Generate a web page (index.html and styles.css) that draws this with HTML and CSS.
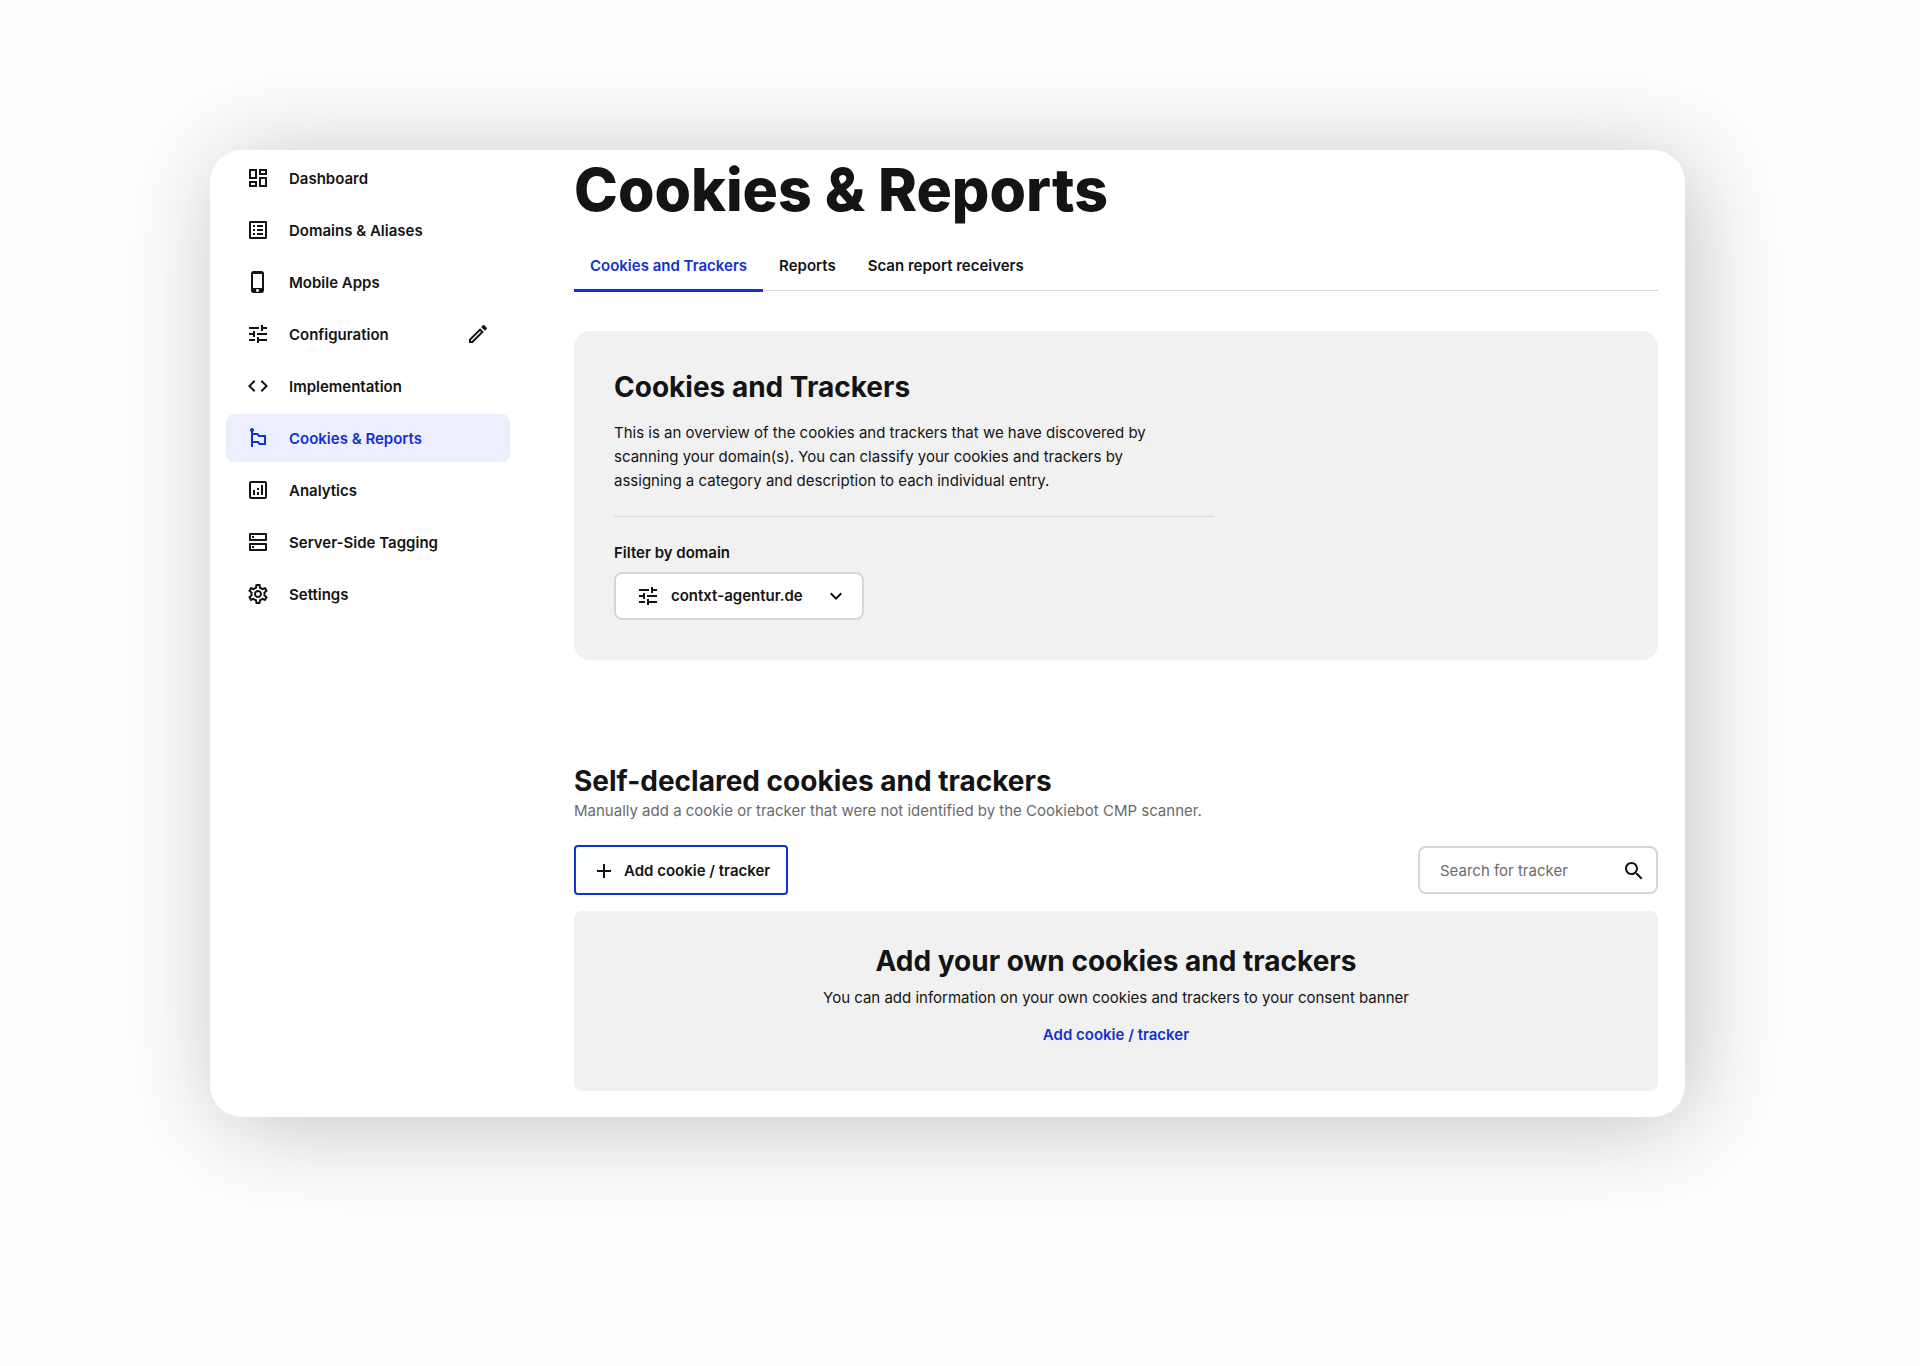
FILE: index.html
```html
<!DOCTYPE html>
<html lang="en">
<head>
<meta charset="utf-8">
<meta name="viewport" content="width=device-width, initial-scale=1">
<title>Cookies &amp; Reports</title>
<link rel="stylesheet" href="styles.css">
</head>
<body>
<div class="window">
  <nav class="sidebar" aria-label="Main">
    <a class="nav-item" href="#dashboard">
      <svg class="icon" viewBox="0 0 24 24"><path d="M19 5v2h-4V5h4M9 5v6H5V5h4m10 8v6h-4v-6h4M9 17v2H5v-2h4M21 3h-8v6h8V3zM11 3H3v10h8V3zm10 8h-8v10h8V11zm-10 4H3v6h8v-6z"/></svg>
      <span class="nav-label">Dashboard</span>
    </a>
    <a class="nav-item" href="#domains">
      <svg class="icon" viewBox="0 0 24 24"><path d="M11 7h6v2h-6zm0 4h6v2h-6zm0 4h6v2h-6zM7 7h2v2H7zm0 4h2v2H7zm0 4h2v2H7zM20.1 3H3.9c-.5 0-.9.4-.9.9v16.2c0 .4.4.9.9.9h16.2c.4 0 .9-.5.9-.9V3.900c0-.5-.5-.9-.9-.9zM19 19H5V5h14v14z"/></svg>
      <span class="nav-label">Domains &amp; Aliases</span>
    </a>
    <a class="nav-item" href="#apps">
      <svg class="icon" viewBox="0 0 24 24"><path d="M15.500 1h-8C6.120 1 5 2.120 5 3.500v17C5 21.880 6.120 23 7.500 23h8c1.380 0 2.500-1.120 2.500-2.500v-17C18 2.120 16.880 1 15.500 1zm-4 21c-.83 0-1.500-.67-1.500-1.500s.67-1.500 1.500-1.500 1.500.67 1.500 1.500-.67 1.500-1.500 1.500zm4.500-4H7V4h9v14z"/></svg>
      <span class="nav-label">Mobile Apps</span>
    </a>
    <a class="nav-item" href="#configuration">
      <svg class="icon" viewBox="0 0 24 24"><path d="M3 17v2h6v-2H3zM3 5v2h10V5H3zm10 16v-2h8v-2h-8v-2h-2v6h2zM7 9v2H3v2h4v2h2V9H7zm14 4v-2H11v2h10zm-6-4h2V7h4V5h-4V3h-2v6z"/></svg>
      <span class="nav-label">Configuration</span>
      <svg class="icon" viewBox="0 0 24 24"><path d="M14.060 9.020l.92.92L5.920 19H5v-.92l9.060-9.060M17.660 3c-.25 0-.51.1-.7.29l-1.830 1.830 3.750 3.750 1.830-1.830c.39-.39.39-1.020 0-1.410l-2.340-2.340c-.2-.2-.45-.29-.71-.29zm-3.600 3.190L3 17.250V21h3.750L17.810 9.940l-3.750-3.750z"/></svg>
    </a>
    <a class="nav-item" href="#implementation">
      <svg class="icon" viewBox="0 0 24 24"><path d="M9.400 16.600L4.800 12l4.600-4.600L8 6l-6 6 6 6 1.400-1.400zm5.200 0l4.600-4.600-4.600-4.600L16 6l6 6-6 6-1.400-1.400z"/></svg>
      <span class="nav-label">Implementation</span>
    </a>
    <a class="nav-item nav-item-active" href="#cookies" aria-current="page">
      <svg class="icon" viewBox="0 0 24 24"><circle cx="6" cy="4" r="2"/><path d="M5 4h2v3h5l1.500 2H20v10h-7l-1.500-2H7v4H5zM7 9v6h5.500l1.500 2h4v-6h-5.500L11 9z"/></svg>
      <span class="nav-label">Cookies &amp; Reports</span>
    </a>
    <a class="nav-item" href="#analytics">
      <svg class="icon" viewBox="0 0 24 24"><path d="M19 3H5c-1.100 0-2 .9-2 2v14c0 1.100.9 2 2 2h14c1.100 0 2-.9 2-2V5c0-1.100-.9-2-2-2zm0 16H5V5h14v14zM7 12h2v5H7zm8-5h2v10h-2zm-4 7h2v3h-2zm0-4h2v2h-2z"/></svg>
      <span class="nav-label">Analytics</span>
    </a>
    <a class="nav-item" href="#tagging">
      <svg class="icon" viewBox="0 0 24 24"><path d="M19 15v4H5v-4h14m1-2H4c-.55 0-1 .45-1 1v6c0 .55.45 1 1 1h16c.55 0 1-.45 1-1v-6c0-.55-.45-1-1-1zM6 16h2v2H6zM19 5v4H5V5h14m1-2H4c-.55 0-1 .45-1 1v6c0 .55.45 1 1 1h16c.55 0 1-.45 1-1V4c0-.55-.45-1-1-1zM6 6h2v2H6z"/></svg>
      <span class="nav-label">Server-Side Tagging</span>
    </a>
    <a class="nav-item" href="#settings">
      <svg class="icon" viewBox="0 0 24 24"><path d="M19.430 12.980c.04-.32.07-.64.07-.98 0-.34-.03-.66-.07-.98l2.110-1.650c.19-.15.24-.42.12-.64l-2-3.460c-.09-.16-.26-.25-.44-.25-.06 0-.12.010-.17.030l-2.490 1c-.52-.4-1.080-.73-1.690-.98l-.38-2.650C14.460 2.180 14.250 2 14 2h-4c-.25 0-.46.18-.49.42l-.38 2.650c-.61.25-1.170.59-1.690.98l-2.490-1c-.06-.02-.12-.03-.18-.03-.17 0-.34.09-.43.25l-2 3.460c-.13.22-.07.49.12.64l2.110 1.650c-.04.32-.07.65-.07.98 0 .33.030.66.070.98l-2.110 1.650c-.19.15-.24.42-.12.640l2 3.460c.09.160.260.250.440.250.06 0 .12-.01.170-.03l2.490-1c.52.4 1.080.73 1.690.98l.38 2.650c.03.240.24.420.49.420h4c.25 0 .46-.18.49-.42l.38-2.650c.61-.25 1.170-.59 1.690-.98l2.490 1c.06.020.12.030.18.030.17 0 .34-.09.43-.25l2-3.460c.12-.22.07-.49-.12-.64l-2.110-1.650zm-1.980-1.710c.04.310.05.520.05.730 0 .21-.02.430-.05.730l-.14 1.130.89.7 1.080.84-.7 1.210-1.270-.51-1.040-.42-.9.680c-.43.320-.84.560-1.250.730l-1.060.43-.16 1.130-.2 1.350h-1.400l-.19-1.350-.16-1.130-1.060-.43c-.43-.18-.83-.41-1.230-.71l-.91-.7-1.060.43-1.270.51-.7-1.210 1.080-.84.89-.7-.14-1.130c-.03-.31-.05-.54-.05-.74s.02-.43.05-.73l.14-1.130-.89-.7-1.080-.84.7-1.210 1.270.51 1.040.42.9-.68c.43-.32.84-.56 1.250-.73l1.060-.43.160-1.130.2-1.350h1.390l.19 1.350.16 1.130 1.060.43c.43.180.83.410 1.230.710l.91.7 1.060-.43 1.270-.51.7 1.210-1.070.85-.89.7.14 1.130zM12 8c-2.210 0-4 1.790-4 4s1.790 4 4 4 4-1.790 4-4-1.790-4-4-4zm0 6c-1.100 0-2-.9-2-2s.9-2 2-2 2 .9 2 2-.9 2-2 2z"/></svg>
      <span class="nav-label">Settings</span>
    </a>
  </nav>

  <main class="content">
    <h1 class="page-title">Cookies &amp; Reports</h1>
    <div class="tabs" role="tablist">
      <button class="tab tab-active" type="button" role="tab" aria-selected="true">Cookies and Trackers</button>
      <button class="tab" type="button" role="tab" aria-selected="false">Reports</button>
      <button class="tab" type="button" role="tab" aria-selected="false">Scan report receivers</button>
    </div>

    <section class="overview">
      <h2 class="heading">Cookies and Trackers</h2>
      <p class="overview-text">This is an overview of the cookies and trackers that we have discovered by scanning your domain(s). You can classify your cookies and trackers by assigning a category and description to each individual entry.</p>
      <hr class="rule">
      <label class="filter-label" for="domain">Filter by domain</label>
      <div class="filter">
        <svg class="icon filter-icon" viewBox="0 0 24 24"><path d="M3 17v2h6v-2H3zM3 5v2h10V5H3zm10 16v-2h8v-2h-8v-2h-2v6h2zM7 9v2H3v2h4v2h2V9H7zm14 4v-2H11v2h10zm-6-4h2V7h4V5h-4V3h-2v6z"/></svg>
        <select class="filter-select" id="domain"><option>contxt-agentur.de</option></select>
        <svg class="icon filter-arrow" viewBox="0 0 24 24"><path d="M7.410 8.590L12 13.170l4.590-4.580L18 10l-6 6-6-6 1.410-1.410z"/></svg>
      </div>
    </section>

    <section class="declared">
      <h2 class="heading">Self-declared cookies and trackers</h2>
      <p class="declared-text">Manually add a cookie or tracker that were not identified by the Cookiebot CMP scanner.</p>
      <div class="toolbar">
        <button class="add-button" type="button">
          <svg class="icon" viewBox="0 0 24 24"><path d="M19 13h-6v6h-2v-6H5v-2h6V5h2v6h6v2z"/></svg>
          Add cookie / tracker
        </button>
        <div class="search">
          <input class="search-input" type="search" placeholder="Search for tracker" aria-label="Search for tracker">
          <svg class="icon" viewBox="0 0 24 24"><path d="M15.500 14h-.79l-.28-.27C15.410 12.590 16 11.110 16 9.500 16 5.910 13.090 3 9.500 3S3 5.910 3 9.500 5.910 16 9.500 16c1.610 0 3.090-.59 4.230-1.570l.27.28v.79l5 4.990L20.490 19l-4.990-5zm-6 0C7.010 14 5 11.990 5 9.500S7.010 5 9.500 5 14 7.010 14 9.500 11.990 14 9.500 14z"/></svg>
        </div>
      </div>
      <div class="empty">
        <h2 class="heading">Add your own cookies and trackers</h2>
        <p class="empty-text">You can add information on your own cookies and trackers to your consent banner</p>
        <a class="empty-link" href="#add">Add cookie / tracker</a>
      </div>
    </section>
  </main>
</div>
</body>
</html>
```

FILE: styles.css
```css
:root {
  --ink: #141414;
  --blue: #1032cf;
  --panel: #f1f1f1;
  --line: #d6d6d6;
}

* {
  box-sizing: border-box;
}

body {
  margin: 0;
  background: #fefefe;
  color: var(--ink);
  font-family: Inter, "Liberation Sans", sans-serif;
  font-size: 15px;
  line-height: 24px;
}

h1, h2, p {
  margin: 0;
}

button, input, select {
  color: inherit;
  font: inherit;
}

.window {
  display: flex;
  gap: 64px;
  margin: 150px 235px 249px 210px;
  padding: 4px 27px 26px 16px;
  border-radius: 32px;
  background: #fff;
  box-shadow: 8px 8px 100px rgba(0, 0, 0, 0.24);
}

.icon {
  flex: none;
  width: 24px;
  height: 24px;
  fill: currentColor;
}

.sidebar {
  display: flex;
  flex: none;
  flex-direction: column;
  gap: 4px;
  width: 284px;
}

.nav-item {
  display: flex;
  align-items: center;
  gap: 19px;
  height: 48px;
  padding: 0 20px;
  border-radius: 8px;
  color: var(--ink);
  font-weight: 600;
  text-decoration: none;
}

.nav-item-active {
  background: #edeefe;
  color: var(--blue);
}

.nav-label {
  flex: 1;
  padding-top: 2px;
}

.content {
  flex: 1;
  min-width: 0;
}

.page-title {
  font-size: 59px;
  font-weight: 800;
  line-height: 72px;
}

.tabs {
  display: flex;
  height: 65px;
  margin-bottom: 40px;
  border-bottom: 1px solid var(--line);
}

.tab {
  height: 66px;
  padding: 28px 16px 11px;
  border: 0;
  border-bottom: 3px solid transparent;
  background: none;
  font-weight: 600;
}

.tab-active {
  border-color: var(--blue);
  color: var(--blue);
}

.heading {
  font-size: 28px;
  font-weight: 700;
  line-height: 32px;
}

.overview {
  padding: 40px;
  border-radius: 16px;
  background: var(--panel);
}

.overview-text {
  max-width: 560px;
  margin-top: 18px;
}

.rule {
  max-width: 600px;
  height: 1px;
  margin: 23px 0 24px;
  border: 0;
  background: var(--line);
}

.filter-label {
  display: block;
  font-weight: 600;
}

.filter {
  display: grid;
  grid-template-columns: 46px 1fr 56px;
  align-items: center;
  width: 250px;
  margin-top: 7px;
}

.filter-icon,
.filter-arrow,
.filter-select {
  grid-row: 1;
}

.filter-icon {
  z-index: 1;
  grid-column: 1;
  justify-self: end;
  pointer-events: none;
}

.filter-arrow {
  z-index: 1;
  grid-column: 3;
  justify-self: center;
  pointer-events: none;
}

.filter-select {
  grid-column: 1 / -1;
  width: 100%;
  height: 48px;
  padding: 0 55px;
  border: 2px solid var(--line);
  border-radius: 8px;
  background: #fff;
  font-weight: 600;
  appearance: none;
}

.declared {
  margin-top: 105px;
}

.declared-text {
  margin-top: 2px;
  color: #6b6b6b;
}

.toolbar {
  display: flex;
  align-items: center;
  justify-content: space-between;
  margin: 22px 0 16px;
}

.add-button {
  display: flex;
  align-items: center;
  gap: 8px;
  height: 50px;
  padding: 2px 16px 0;
  border: 2px solid var(--blue);
  border-radius: 4px;
  background: #fff;
  font-weight: 600;
}

.search {
  display: flex;
  align-items: center;
  width: 240px;
  height: 48px;
  padding: 2px 10px 0 20px;
  border: 2px solid var(--line);
  border-radius: 8px;
}

.search-input {
  flex: 1;
  min-width: 0;
  padding: 0;
  border: 0;
  outline: 0;
  background: none;
  appearance: none;
}

.search-input::placeholder {
  color: #6b6b6b;
  opacity: 1;
}

.empty {
  padding: 34px 40px 44px;
  border-radius: 8px;
  background: var(--panel);
  text-align: center;
}

.empty-text {
  margin: 9px 0 13px;
}

.empty-link {
  color: var(--blue);
  font-weight: 600;
  text-decoration: none;
}
```
